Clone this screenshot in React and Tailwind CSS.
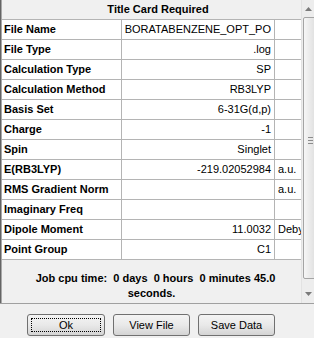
import React from "react";

const rows = [
  ["File Name", "BORATABENZENE_OPT_PO", ""],
  ["File Type", ".log", ""],
  ["Calculation Type", "SP", ""],
  ["Calculation Method", "RB3LYP", ""],
  ["Basis Set", "6-31G(d,p)", ""],
  ["Charge", "-1", ""],
  ["Spin", "Singlet", ""],
  ["E(RB3LYP)", "-219.02052984", "a.u."],
  ["RMS Gradient Norm", "", "a.u."],
  ["Imaginary Freq", "", ""],
  ["Dipole Moment", "11.0032", "Debye"],
  ["Point Group", "C1", ""],
];

const Button = ({ label, focused, width }) => (
  <button
    className={`relative h-[22px] ${width} rounded-[3px] border border-[#707070] bg-linear-to-b from-[#f4f4f4] via-[#e9e9e9] to-[#d4d4d4] text-[11px] text-black`}
  >
    {label}
    {focused && (
      <span className="absolute inset-[3px] border border-dotted border-black" />
    )}
  </button>
);

const Scrollbar = () => (
  <div className="w-[13px] overflow-hidden flex flex-col bg-[#ededed] border-l border-[#e2e2e2]">
    <div className="h-[17px] flex items-center justify-end pr-[2px]">
      <svg width="7" height="4" viewBox="0 0 7 4">
        <path d="M0 4 L3.5 0 L7 4 Z" fill="#7a7a7a" />
      </svg>
    </div>
    <div className="h-[262px] ml-[1px] w-[16px] rounded-[2px] border border-[#a4a4a4] bg-linear-to-r from-[#f6f6f6] to-[#dadada] flex flex-col items-start pl-[4px] pt-[119px] gap-[2px]">
      <div className="w-[5px] h-px bg-[#8c8c8c]" />
      <div className="w-[5px] h-px bg-[#8c8c8c]" />
      <div className="w-[5px] h-px bg-[#8c8c8c]" />
    </div>
    <div className="flex-1 flex items-center justify-end pr-[2px] pt-[6px]">
      <svg width="7" height="4" viewBox="0 0 7 4">
        <path d="M0 0 L7 0 L3.5 4 Z" fill="#7a7a7a" />
      </svg>
    </div>
  </div>
);

export default function App() {
  return (
    <div className="w-[314px] h-[338px] bg-[#f0f0f0] flex flex-col overflow-hidden font-['Liberation_Sans',Arial,sans-serif] text-[11px] text-black">
      <div className="h-[304px] flex border-b border-[#a0a0a0]">
        <div className="w-px bg-[#646464]" />
        <div className="w-px bg-[#a8a8a8]" />
        <div className="w-[299px] flex flex-col">
          <div className="h-[20px] border-b border-[#b4b4b4] flex items-center justify-center pl-[13px] font-bold">
            Title Card Required
          </div>
          {rows.map(([label, value, unit]) => (
            <div key={label} className="h-[20px] flex border-b border-[#b4b4b4] bg-white">
              <div className="w-[120px] border-r border-[#b4b4b4] pl-[2px] font-bold flex items-center whitespace-nowrap">
                {label}
              </div>
              <div className="w-[153px] border-r border-[#b4b4b4] pr-[3px] pl-[6px] flex items-center justify-end whitespace-nowrap overflow-hidden">
                {value}
              </div>
              <div className="flex-1 pl-[3px] flex items-center whitespace-nowrap overflow-hidden">
                {unit}
              </div>
            </div>
          ))}
          <div className="flex-1 flex flex-col items-center pt-[11px] font-bold leading-[15px] whitespace-pre">
            <div className="pl-[8px]">Job cpu time:  0 days  0 hours  0 minutes 45.0</div>
            <div>seconds.</div>
          </div>
        </div>
        <Scrollbar />
      </div>
      <div className="flex-1 flex items-start pt-[10px] pl-[27px] gap-[8px]">
        <Button label="Ok" focused width="w-[78px]" />
        <Button label="View File" width="w-[77px]" />
        <Button label="Save Data" width="w-[77px]" />
      </div>
    </div>
  );
}
